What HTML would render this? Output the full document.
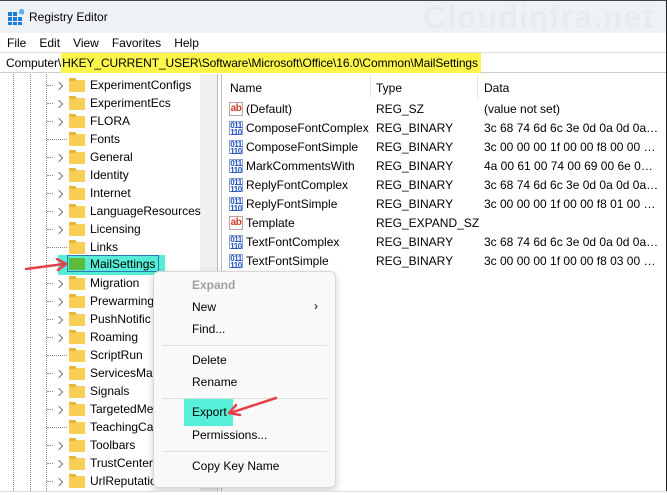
<!DOCTYPE html>
<html><head><style>
*{margin:0;padding:0;box-sizing:border-box}
body{width:667px;height:494px;overflow:hidden;background:#fff;font-family:"Liberation Sans",sans-serif;font-size:12px;color:#000;position:relative;border-right:1px solid #222;border-top:1px solid #444}
.abs{position:absolute;white-space:nowrap}
.title{left:0;top:0;width:666px;height:32px;background:#eef2f6}
.wm{right:12px;top:-2px;font-size:32px;font-weight:bold;color:#e8ecf1;letter-spacing:1px}
.menu span{margin-right:13px}
.addr{left:0;top:51px;width:666px;height:21px;border-top:1px solid #ddd;border-bottom:1px solid #ccc;background:#fff}
.hl{background:#fdf64a}
.dot{position:absolute;width:0;border-left:1px dotted #888}
.chev{position:absolute;left:56px;width:6px;height:6px;border-right:1.3px solid #777;border-top:1.3px solid #777;transform:rotate(45deg)}
.fold{position:absolute;left:69px;width:16px;height:12px;background:#f8cf54;border-radius:1px}
.fold:before{content:"";position:absolute;left:0;top:-2px;width:7px;height:3px;background:#e8b532;border-radius:1px 1px 0 0}
.ico{position:absolute;left:229px;width:14px;height:14px;font-size:8px;line-height:7px;font-weight:bold;color:#1d4fbf;border:1px solid #8aa0d0;text-align:center;letter-spacing:-0.5px}
.ab{color:#d0402a;border-color:#c0a0a0;font-size:10px;line-height:12px}
.cm{left:153px;top:270px;width:183px;height:217px;background:#f9f9f9;border:1px solid #d8d8d8;border-radius:6px;box-shadow:0 3px 8px rgba(0,0,0,.2)}
.cm div{position:absolute;left:38px}
.sep{height:1px;background:#ddd;left:9px!important;width:164px}
</style></head><body>
<div class="abs title"></div>
<div class="abs wm">Cloudinfra.net</div>
<svg class="abs" style="left:8px;top:8px" width="16" height="16"><g fill="#1a7ad8"><rect x="0" y="3" width="4" height="4"/><rect x="5" y="3" width="4" height="4"/><rect x="0" y="8" width="4" height="4"/><rect x="5" y="8" width="4" height="4"/><rect x="10" y="8" width="4" height="4"/><rect x="0" y="13" width="4" height="3"/><rect x="5" y="13" width="4" height="3"/><rect x="10" y="13" width="4" height="3"/></g><rect x="11" y="0" width="5" height="5" fill="#5ab0f0" transform="rotate(20 13 3)"/></svg>
<div class="abs" style="left:29px;top:9px;font-size:12px">Registry Editor</div>
<div class="abs menu" style="left:7px;top:35px"><span>File</span><span>Edit</span><span>View</span><span>Favorites</span><span>Help</span></div>
<div class="abs addr"></div>
<div class="abs" style="left:6px;top:55px;letter-spacing:-0.1px">Computer\<span class="hl" style="padding:3px 3px 3px 1px">HKEY_CURRENT_USER\Software\Microsoft\Office\16.0\Common\MailSettings</span></div>
<div class="abs" style="left:0;top:73px;width:220px;height:421px">
<div class="dot" style="left:13px;top:0;height:421px"></div>
<div class="dot" style="left:30px;top:0;height:421px"></div>
<div class="dot" style="left:46px;top:0;height:421px"></div>
<div class="abs" style="left:200px;top:0;width:17px;height:421px;background:#f0f0f0"></div>
<div class="abs" style="left:217px;top:0;width:1px;height:421px;background:#bbb"></div>
</div>
<div class="abs" style="left:221px;top:73px;width:1px;height:421px;background:#bbb"></div>
<div id="tree"></div>
<div class="abs" style="left:230px;top:80px">Name</div>
<div class="abs" style="left:370px;top:73px;width:1px;height:24px;background:#e4e4e4"></div>
<div class="abs" style="left:376px;top:80px">Type</div>
<div class="abs" style="left:477px;top:73px;width:1px;height:24px;background:#e4e4e4"></div>
<div class="abs" style="left:484px;top:80px">Data</div>
<div id="vals"></div>
<div class="abs" style="left:58px;top:254px;width:107px;height:20px;background:#56ecd6"></div>
<div class="abs" style="left:67px;top:254px;width:92px;height:17px;border:1px solid #2a7ab8"></div>
<div class="abs" style="left:69px;top:257px;width:16px;height:12px;background:#5cba3c"></div>
<div class="abs" style="left:90px;top:256px">MailSettings</div>
<svg class="abs" style="left:24px;top:257px" width="45" height="14"><path d="M2 11 L40 6" stroke="#e8404a" stroke-width="2.5" stroke-linecap="round"/><path d="M33 1 L42 6 L34 12" fill="none" stroke="#e8404a" stroke-width="2.5" stroke-linecap="round" stroke-linejoin="round"/></svg>
<div class="abs cm">
<div style="top:6px;color:#a0a0a0;font-weight:bold">Expand</div>
<div style="top:28px">New</div><div style="left:160px!important;top:27px">&#8250;</div>
<div style="top:50px">Find...</div>
<div class="sep" style="top:73px"></div>
<div style="top:81px">Delete</div>
<div style="top:103px">Rename</div>
<div class="sep" style="top:126px"></div>
<div style="left:30px!important;top:127px;width:49px;height:27px;background:#56f0d8"></div>
<div style="top:133px">Export</div>
<div style="top:156px">Permissions...</div>
<div class="sep" style="top:179px"></div>
<div style="top:187px">Copy Key Name</div>
</div>
<svg class="abs" style="left:226px;top:393px" width="55" height="24"><path d="M4 19 L50 4" stroke="#e8404a" stroke-width="2.5" stroke-linecap="round"/><path d="M10 11 L3 19 L14 21" fill="none" stroke="#e8404a" stroke-width="2.5" stroke-linecap="round" stroke-linejoin="round"/></svg>
<div class="abs" style="left:0;top:490px;width:667px;height:4px;background:#fff;border-top:1px solid #ddd"></div>
<script>
var t=[["ExperimentConfigs",1],["ExperimentEcs",1],["FLORA",1],["Fonts",0],["General",1],["Identity",1],["Internet",1],["LanguageResources",1],["Licensing",1],["Links",0],["",0],["Migration",1],["Prewarming",1],["PushNotific",1],["Roaming",1],["ScriptRun",0],["ServicesMar",1],["Signals",1],["TargetedMe",1],["TeachingCal",0],["Toolbars",1],["TrustCenter",1],["UrlReputation",1]];
var h="";t.forEach(function(r,i){var y=76+i*18;if(i==10)return;
h+='<div class="abs" style="left:47px;top:'+(y+8)+'px;width:'+(r[1]?6:20)+'px;border-top:1px dotted #888"></div>';
if(r[1])h+='<div class="chev" style="top:'+(y+6)+'px"></div>';
h+='<div class="fold" style="top:'+(y+3)+'px"></div><div class="abs" style="left:90px;top:'+(y+1)+'px;'+(i>10&&i<20?'width:63px;overflow:hidden':'')+'">'+r[0]+'</div>';});
document.getElementById("tree").innerHTML=h;
var v=[["(Default)","REG_SZ","(value not set)",1],["ComposeFontComplex","REG_BINARY","3c 68 74 6d 6c 3e 0d 0a 0d 0a 3c 00 00"],["ComposeFontSimple","REG_BINARY","3c 00 00 00 1f 00 00 f8 00 00 00 00 00"],["MarkCommentsWith","REG_BINARY","4a 00 61 00 74 00 69 00 6e 00 20 00 00"],["ReplyFontComplex","REG_BINARY","3c 68 74 6d 6c 3e 0d 0a 0d 0a 3c 00 00"],["ReplyFontSimple","REG_BINARY","3c 00 00 00 1f 00 00 f8 01 00 00 00 00"],["Template","REG_EXPAND_SZ","",1],["TextFontComplex","REG_BINARY","3c 68 74 6d 6c 3e 0d 0a 0d 0a 3c 00 00"],["TextFontSimple","REG_BINARY","3c 00 00 00 1f 00 00 f8 03 00 00 00 00"]];
h="";v.forEach(function(r,i){var y=100+i*19;
h+='<div class="ico'+(r[3]?' ab':'')+'" style="top:'+(y+1)+'px">'+(r[3]?'ab':'011<br>110')+'</div>';
h+='<div class="abs" style="left:246px;top:'+(y+1)+'px">'+r[0]+'</div><div class="abs" style="left:376px;top:'+(y+1)+'px">'+r[1]+'</div><div class="abs" style="left:484px;top:'+(y+1)+'px;width:175px;overflow:hidden;text-overflow:ellipsis">'+r[2]+'</div>';});
document.getElementById("vals").innerHTML=h;
</script>
</body></html>
